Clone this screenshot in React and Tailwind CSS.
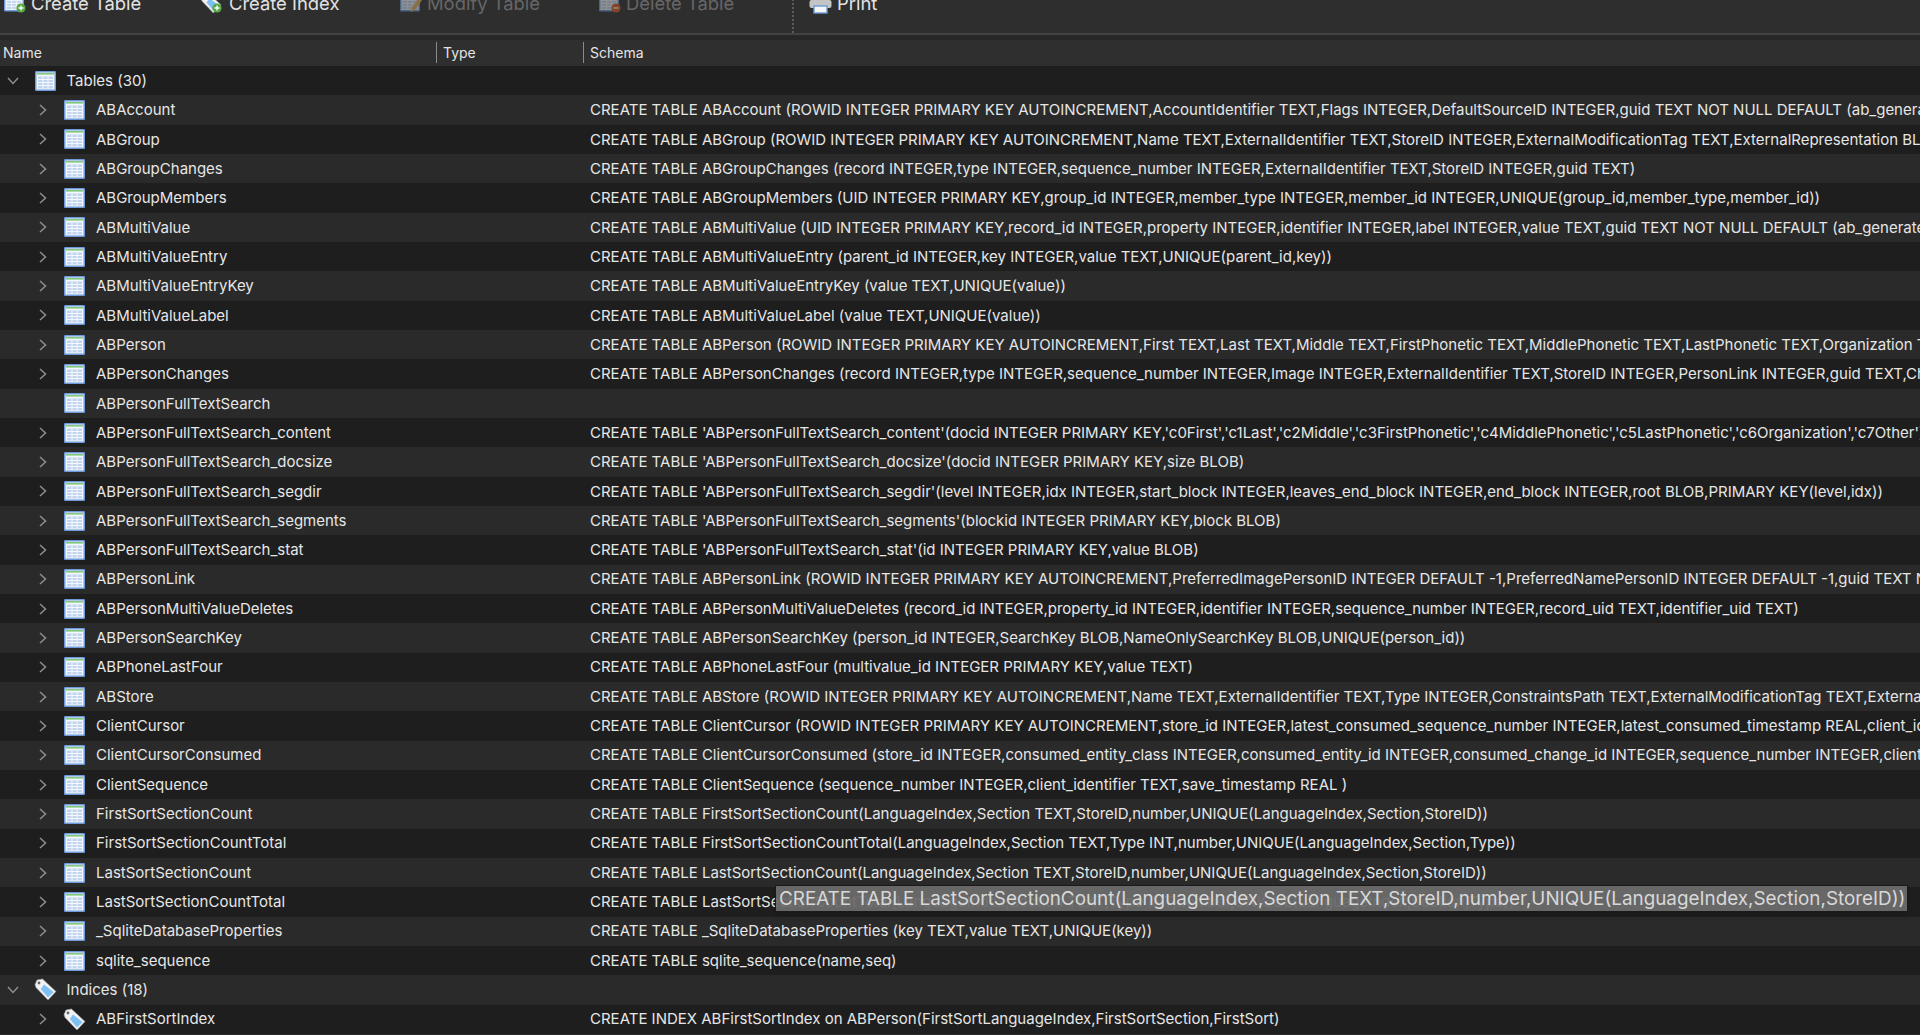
import React from 'react';

const rows = [
  ['ABAccount', "CREATE TABLE ABAccount (ROWID INTEGER PRIMARY KEY AUTOINCREMENT,AccountIdentifier TEXT,Flags INTEGER,DefaultSourceID INTEGER,guid TEXT NOT NULL DEFAULT (ab_generate_guid()))"],
  ['ABGroup', "CREATE TABLE ABGroup (ROWID INTEGER PRIMARY KEY AUTOINCREMENT,Name TEXT,ExternalIdentifier TEXT,StoreID INTEGER,ExternalModificationTag TEXT,ExternalRepresentation BLOB)"],
  ['ABGroupChanges', "CREATE TABLE ABGroupChanges (record INTEGER,type INTEGER,sequence_number INTEGER,ExternalIdentifier TEXT,StoreID INTEGER,guid TEXT)"],
  ['ABGroupMembers', "CREATE TABLE ABGroupMembers (UID INTEGER PRIMARY KEY,group_id INTEGER,member_type INTEGER,member_id INTEGER,UNIQUE(group_id,member_type,member_id))"],
  ['ABMultiValue', "CREATE TABLE ABMultiValue (UID INTEGER PRIMARY KEY,record_id INTEGER,property INTEGER,identifier INTEGER,label INTEGER,value TEXT,guid TEXT NOT NULL DEFAULT (ab_generate_guid()))"],
  ['ABMultiValueEntry', "CREATE TABLE ABMultiValueEntry (parent_id INTEGER,key INTEGER,value TEXT,UNIQUE(parent_id,key))"],
  ['ABMultiValueEntryKey', "CREATE TABLE ABMultiValueEntryKey (value TEXT,UNIQUE(value))"],
  ['ABMultiValueLabel', "CREATE TABLE ABMultiValueLabel (value TEXT,UNIQUE(value))"],
  ['ABPerson', "CREATE TABLE ABPerson (ROWID INTEGER PRIMARY KEY AUTOINCREMENT,First TEXT,Last TEXT,Middle TEXT,FirstPhonetic TEXT,MiddlePhonetic TEXT,LastPhonetic TEXT,Organization TEXT)"],
  ['ABPersonChanges', "CREATE TABLE ABPersonChanges (record INTEGER,type INTEGER,sequence_number INTEGER,Image INTEGER,ExternalIdentifier TEXT,StoreID INTEGER,PersonLink INTEGER,guid TEXT,Changes TEXT)"],
  ['ABPersonFullTextSearch', '', true],
  ['ABPersonFullTextSearch_content', "CREATE TABLE 'ABPersonFullTextSearch_content'(docid INTEGER PRIMARY KEY,'c0First','c1Last','c2Middle','c3FirstPhonetic','c4MiddlePhonetic','c5LastPhonetic','c6Organization','c7Other')"],
  ['ABPersonFullTextSearch_docsize', "CREATE TABLE 'ABPersonFullTextSearch_docsize'(docid INTEGER PRIMARY KEY,size BLOB)"],
  ['ABPersonFullTextSearch_segdir', "CREATE TABLE 'ABPersonFullTextSearch_segdir'(level INTEGER,idx INTEGER,start_block INTEGER,leaves_end_block INTEGER,end_block INTEGER,root BLOB,PRIMARY KEY(level,idx))"],
  ['ABPersonFullTextSearch_segments', "CREATE TABLE 'ABPersonFullTextSearch_segments'(blockid INTEGER PRIMARY KEY,block BLOB)"],
  ['ABPersonFullTextSearch_stat', "CREATE TABLE 'ABPersonFullTextSearch_stat'(id INTEGER PRIMARY KEY,value BLOB)"],
  ['ABPersonLink', "CREATE TABLE ABPersonLink (ROWID INTEGER PRIMARY KEY AUTOINCREMENT,PreferredImagePersonID INTEGER DEFAULT -1,PreferredNamePersonID INTEGER DEFAULT -1,guid TEXT NOT NULL)"],
  ['ABPersonMultiValueDeletes', "CREATE TABLE ABPersonMultiValueDeletes (record_id INTEGER,property_id INTEGER,identifier INTEGER,sequence_number INTEGER,record_uid TEXT,identifier_uid TEXT)"],
  ['ABPersonSearchKey', "CREATE TABLE ABPersonSearchKey (person_id INTEGER,SearchKey BLOB,NameOnlySearchKey BLOB,UNIQUE(person_id))"],
  ['ABPhoneLastFour', "CREATE TABLE ABPhoneLastFour (multivalue_id INTEGER PRIMARY KEY,value TEXT)"],
  ['ABStore', "CREATE TABLE ABStore (ROWID INTEGER PRIMARY KEY AUTOINCREMENT,Name TEXT,ExternalIdentifier TEXT,Type INTEGER,ConstraintsPath TEXT,ExternalModificationTag TEXT,ExternalSyncTag TEXT)"],
  ['ClientCursor', "CREATE TABLE ClientCursor (ROWID INTEGER PRIMARY KEY AUTOINCREMENT,store_id INTEGER,latest_consumed_sequence_number INTEGER,latest_consumed_timestamp REAL,client_identifier TEXT)"],
  ['ClientCursorConsumed', "CREATE TABLE ClientCursorConsumed (store_id INTEGER,consumed_entity_class INTEGER,consumed_entity_id INTEGER,consumed_change_id INTEGER,sequence_number INTEGER,client_identifier TEXT)"],
  ['ClientSequence', "CREATE TABLE ClientSequence (sequence_number INTEGER,client_identifier TEXT,save_timestamp REAL )"],
  ['FirstSortSectionCount', "CREATE TABLE FirstSortSectionCount(LanguageIndex,Section TEXT,StoreID,number,UNIQUE(LanguageIndex,Section,StoreID))"],
  ['FirstSortSectionCountTotal', "CREATE TABLE FirstSortSectionCountTotal(LanguageIndex,Section TEXT,Type INT,number,UNIQUE(LanguageIndex,Section,Type))"],
  ['LastSortSectionCount', "CREATE TABLE LastSortSectionCount(LanguageIndex,Section TEXT,StoreID,number,UNIQUE(LanguageIndex,Section,StoreID))"],
  ['LastSortSectionCountTotal', "CREATE TABLE LastSortSectionCountTotal(LanguageIndex,Section TEXT,Type INT,number,UNIQUE(LanguageIndex,Section,Type))"],
  ['_SqliteDatabaseProperties', "CREATE TABLE _SqliteDatabaseProperties (key TEXT,value TEXT,UNIQUE(key))"],
  ['sqlite_sequence', "CREATE TABLE sqlite_sequence(name,seq)"],
];

function TableIcon({ className }) {
  return (
    <svg viewBox="0 0 21 20" className={className}>
      <rect x="0.75" y="0.75" width="19.5" height="18.5" rx="0.5" fill="#f4f7fb" stroke="#6c9ada" strokeWidth="1.5" />
      <rect x="2" y="2" width="17" height="1.6" fill="#83c77a" />
      <rect x="3" y="5.5" width="15" height="12" fill="#c2d5f0" />
      <path d="M3 8.5h15M3 11.5h15M3 14.5h15M8 5.5v12M13 5.5v12" stroke="#f4f7fb" strokeWidth="1" fill="none" />
    </svg>
  );
}

function TagIcon({ className }) {
  return (
    <svg viewBox="0 0 23 23" className={className}>
      <path d="M1 6.5L3 2 8.5 1 22 13.5 14 22 2 9.5z" fill="#f1f1f1" stroke="#9a9a9a" strokeWidth="0.6" />
      <path d="M10 6.5l9.5 7.5-5.5 5.5L6.8 11z" fill="#7fc0f2" />
      <circle cx="5" cy="5" r="1.4" fill="#666666" />
    </svg>
  );
}

function Chevron({ open }) {
  if (open) {
    return (
      <svg viewBox="0 0 12 8" className="h-[8px] w-[12px]">
        <path d="M1 1l5 5.5L11 1" fill="none" stroke="#8e8e8e" strokeWidth="1.5" />
      </svg>
    );
  }
  return (
    <svg viewBox="0 0 8 12" className="h-[12px] w-[8px]">
      <path d="M1 1l5.5 5L1 11" fill="none" stroke="#8e8e8e" strokeWidth="1.5" />
    </svg>
  );
}

function Row({ idx, depth, name, schema, icon, noChevron, open }) {
  return (
    <div className={`flex h-[29.33px] items-center whitespace-nowrap ${idx % 2 === 0 ? 'bg-[#1e1e1e]' : 'bg-[#2a2a2a]'}`}>
      <div className="flex w-[590px] shrink-0 items-center">
        <div className={`flex shrink-0 items-center ${depth ? 'w-[64px] pl-[39px]' : 'w-[35px] pl-[7px]'}`}>
          {!noChevron && <Chevron open={open} />}
        </div>
        <div className={`flex shrink-0 items-center ${depth ? 'w-[32px]' : 'w-[31.5px]'}`}>
          {icon === 'tag' ? <TagIcon className="-ml-[1.5px] h-[23px] w-[23px]" /> : <TableIcon className="h-[20px] w-[21px]" />}
        </div>
        <span className="pt-px text-[15px] text-[#e6e6e6]">{name}</span>
      </div>
      <span className="pt-px text-[15px] text-[#e6e6e6]">{schema}</span>
    </div>
  );
}

function Badge({ color, sign }) {
  return (
    <svg viewBox="0 0 10 10" className="absolute right-0 bottom-[1px] h-[10px] w-[10px]">
      <circle cx="5" cy="5" r="4.6" fill={color} />
      <path d={sign === 'plus' ? 'M2.5 5h5M5 2.5v5' : 'M2.5 5h5'} stroke="#ffffff" strokeWidth="1.3" />
    </svg>
  );
}

function ToolIcon({ kind }) {
  if (kind === 'print') {
    return (
      <svg viewBox="0 0 23 22" className="h-[22px] w-[23px]">
        <rect x="5" y="0" width="13" height="10" fill="#f2f2f2" />
        <rect x="0.5" y="8" width="22" height="8" rx="2" fill="#c4c4c4" />
        <rect x="5" y="14" width="13" height="7" fill="#f5f5f5" stroke="#6c9ada" strokeWidth="1.4" />
      </svg>
    );
  }
  return (
    <div className={`relative h-[22px] w-[22px] ${kind === 'modify' || kind === 'delete' ? 'opacity-50' : ''}`}>
      {kind === 'index' ? <TagIcon className="h-[22px] w-[22px]" /> : <TableIcon className="h-[20px] w-[20px]" />}
      {(kind === 'table' || kind === 'index') && <Badge color="#56a845" sign="plus" />}
      {kind === 'delete' && <Badge color="#d9591c" sign="minus" />}
      {kind === 'modify' && (
        <svg viewBox="0 0 12 14" className="absolute right-0 bottom-[1px] h-[16px] w-[12px]">
          <path d="M9 0l3 2-7 10-4 2 1-5z" fill="#e0b060" />
        </svg>
      )}
    </div>
  );
}

function ToolButton({ label, kind, disabled, className }) {
  return (
    <div className={`flex items-start text-[18.4px] leading-[22px] ${disabled ? 'text-[#666666]' : 'text-[#e2e2e2]'} ${className}`}>
      <ToolIcon kind={kind} />
      <span>{label}</span>
    </div>
  );
}

export default function App() {
  return (
    <div className="relative h-[1035px] w-[1920px] overflow-hidden bg-[#2b2b2b] font-['Inter',sans-serif]">
      {/* toolbar, scrolled off the top of the window */}
      <div className="h-[33px] overflow-hidden bg-[#2e2e2e]">
        <div className="-mt-[8px] flex h-[41px] items-start pl-[4px]">
          <ToolButton label="Create Table" kind="table" className="w-[196px] gap-[5px]" />
          <ToolButton label="Create Index" kind="index" className="w-[200px] gap-[7px]" />
          <ToolButton label="Modify Table" kind="modify" disabled className="w-[199px] gap-[5px]" />
          <ToolButton label="Delete Table" kind="delete" disabled className="w-[193px] gap-[5px]" />
          <div className="h-[41px] border-l-2 border-dotted border-[#5c5c5c] pl-[15px]">
            <ToolButton label="Print" kind="print" className="gap-[5px]" />
          </div>
        </div>
      </div>
      <div className="h-[7px] border-t-2 border-[#434343] bg-[#272727]" />
      {/* header */}
      <div className="flex h-[26px] items-center bg-[#2f2f2f] pb-[2px] text-[14px] text-[#e4e4e4]">
        <div className="w-[436px] pl-[3px]">Name</div>
        <div className="w-[147px] border-l border-[#8a8a8a] pl-[6px]">Type</div>
        <div className="border-l border-[#8a8a8a] pl-[6px]">Schema</div>
      </div>
      {/* tree */}
      <Row idx={0} depth={0} open name="Tables (30)" schema="" />
      {rows.map(([name, schema, noChevron], i) => (
        <Row key={name} idx={i + 1} depth={1} name={name} schema={schema} noChevron={noChevron} />
      ))}
      <Row idx={31} depth={0} open icon="tag" name="Indices (18)" schema="" />
      <Row idx={32} depth={1} icon="tag" name="ABFirstSortIndex" schema="CREATE INDEX ABFirstSortIndex on ABPerson(FirstSortLanguageIndex,FirstSortSection,FirstSort)" />
      {/* hover tooltip */}
      <div className="absolute left-[775px] top-[885px] flex h-[27px] w-[1133px] items-center whitespace-nowrap border border-[#1a1a1a] bg-[#6c6c6c]/95 pl-[3px] pt-[2px] text-[18.85px] text-[#d8d8d8] shadow-md">
        CREATE TABLE LastSortSectionCount(LanguageIndex,Section TEXT,StoreID,number,UNIQUE(LanguageIndex,Section,StoreID))
      </div>
    </div>
  );
}
